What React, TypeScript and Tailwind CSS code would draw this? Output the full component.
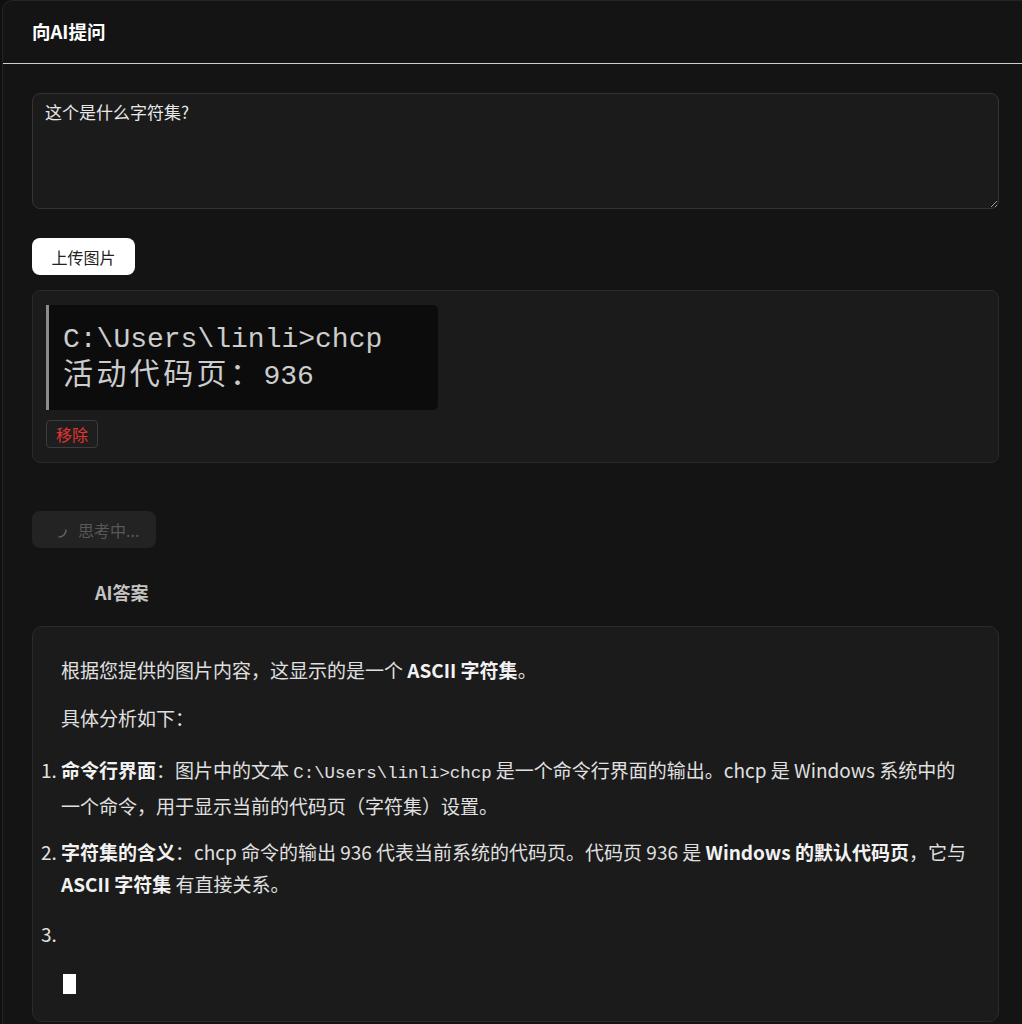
import { useState } from 'react';

const Spinner = () => (
  <svg width="18" height="18" viewBox="0 0 18 18" fill="none">
    <path d="M16 9 A7 7 0 0 1 9 16" stroke="#5f5f5f" strokeWidth="1.6" strokeLinecap="round" />
  </svg>
);

const TerminalShot = () => (
  <div className="w-[392px] h-[105px] bg-[#0c0c0c] border-l-[3px] border-[#8c8c8c] rounded-r-[5px] pl-[14px] pt-[18px] font-['Liberation_Mono','Noto_Sans_CJK_SC',monospace] text-[28px] leading-[33px] text-[#cccccc]">
    <div>{'C:\\Users\\linli>chcp'}</div>
    <div>
      <span className="font-['Noto_Sans_CJK_SC',sans-serif] text-[30px] leading-none tracking-[3.4px]">活动代码页：</span>
      <span>936</span>
    </div>
  </div>
);

const App = () => {
  const [question, setQuestion] = useState('这个是什么字符集?');

  return (
    <div className="min-h-screen bg-[#0f0f0f] pl-[2px] font-['Noto_Sans_CJK_SC','Noto_Sans',sans-serif]">
      <div className="min-h-screen bg-[#141414] border-l border-t border-[#242424] rounded-tl-[10px]">
        <div className="h-[63px] flex items-center pl-[29px] border-b border-[#cfcfcf] text-[18.5px] font-bold text-white">
          向AI提问
        </div>

        <div className="pl-[29px] pr-[23px] pt-[29px]">
          <textarea
            value={question}
            onChange={(e) => setQuestion(e.target.value)}
            className="block w-full h-[116px] bg-[#1b1b1b] border border-[#333333] rounded-lg px-3 pt-[6px] text-[17px] leading-6 text-[#e8e8e8] outline-none"
          />

          <button className="mt-[29px] w-[103px] h-[37px] bg-white rounded-lg text-[16px] text-[#222222] flex items-center justify-center">
            上传图片
          </button>

          <div className="mt-[15px] bg-[#1b1b1b] border border-[#2a2a2a] rounded-lg pl-[13px] pt-[14px] pb-[14px]">
            <TerminalShot />
            <button className="mt-[10px] w-[52px] h-[28px] border border-[#3d3d3d] rounded-[4px] bg-[#1e1e1e] text-[16px] text-[#e03535] flex items-center justify-center">
              移除
            </button>
          </div>

          <button
            disabled
            className="mt-[48px] h-[37px] w-[124px] bg-[#232323] rounded-lg pl-[18px] flex items-center gap-[10px] text-[16px] text-[#585858]"
          >
            <Spinner />
            <span>思考中...</span>
          </button>

          <div className="mt-[30px] ml-[63px] h-[28px] flex items-center text-[18px] font-semibold text-[#c4c4c4]">
            AI答案
          </div>

          <div className="mt-[20px] bg-[#1b1b1b] border border-[#2a2a2a] rounded-[10px] pl-[28px] pr-[28px] pt-[27px] pb-[27px] text-[19px] leading-8 text-[#e0e0e0]">
            <p>
              根据您提供的图片内容，这显示的是一个 <strong className="font-bold text-[#f2f2f2]">ASCII 字符集</strong>。
            </p>
            <p className="mt-4">具体分析如下：</p>
            <ol className="mt-5 list-decimal list-outside">
              <li>
                <strong className="font-bold text-[#f2f2f2]">命令行界面</strong>：图片中的文本{' '}
                <code className="font-['Liberation_Mono',monospace] text-[17.4px]">{'C:\\Users\\linli>chcp'}</code>{' '}
                是一个命令行界面的输出。chcp 是 Windows 系统中的一个命令，用于显示当前的代码页（字符集）设置。
              </li>
              <li className="mt-[14px]">
                <strong className="font-bold text-[#f2f2f2]">字符集的含义</strong>：chcp 命令的输出 936 代表当前系统的代码页。代码页 936 是{' '}
                <strong className="font-bold text-[#f2f2f2]">Windows 的默认代码页</strong>，它与{' '}
                <strong className="font-bold text-[#f2f2f2]">ASCII 字符集</strong> 有直接关系。
              </li>
              <li className="mt-[18px]">&nbsp;</li>
            </ol>
            <div className="mt-6 ml-[2px] w-[13px] h-[20px] bg-white" />
          </div>
        </div>
      </div>
    </div>
  );
};

export default App;
